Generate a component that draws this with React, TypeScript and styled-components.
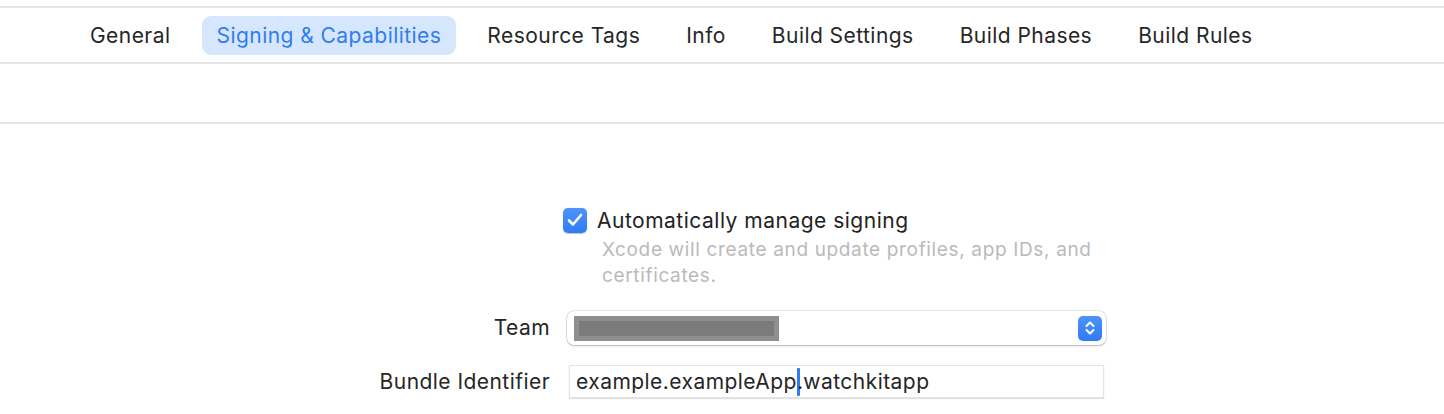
import React from "react"
import styled, { createGlobalStyle } from "styled-components"

const GlobalStyle = createGlobalStyle`
    html, body {
        margin: 0;
        padding: 0;
        background: #ffffff;
    }
    body {
        font-family: "Inter", "Noto Sans", "Liberation Sans", sans-serif;
        color: #262626;
        -webkit-font-smoothing: antialiased;
    }
`;

const tabs = [
    'General',
    'Signing & Capabilities',
    'Resource Tags',
    'Info',
    'Build Settings',
    'Build Phases',
    'Build Rules',
];

const Tab = ({ text, selected }: { text: string; selected?: boolean }) => (
    <TabItem $selected={selected}>{text}</TabItem>
);

const Stepper = () => (
    <StepperButton>
        <svg width="12" height="16" viewBox="0 0 12 16" fill="none">
            <path d="M2.5 6 L6 2.5 L9.5 6" stroke="#fff" strokeWidth="2" strokeLinecap="round" strokeLinejoin="round" />
            <path d="M2.5 10 L6 13.5 L9.5 10" stroke="#fff" strokeWidth="2" strokeLinecap="round" strokeLinejoin="round" />
        </svg>
    </StepperButton>
);

export default function App() {
    return (
        <>
            <GlobalStyle />
            <Page>
                <TabBar>
                    {tabs.map(t => (
                        <Tab key={t} text={t} selected={t === 'Signing & Capabilities'} />
                    ))}
                </TabBar>
                <Spacer />
                <Form>
                    <FieldLabel />
                    <CheckboxBlock>
                        <CheckboxRow>
                            <Checkbox>
                                <svg width="16" height="14" viewBox="0 0 16 14" fill="none">
                                    <path d="M2 7.5 L6 11.5 L14 2" stroke="#fff" strokeWidth="2.6" strokeLinecap="round" strokeLinejoin="round" />
                                </svg>
                            </Checkbox>
                            <CheckboxText>Automatically manage signing</CheckboxText>
                        </CheckboxRow>
                        <Description>
                            Xcode will create and update profiles, app IDs, and certificates.
                        </Description>
                    </CheckboxBlock>

                    <FieldLabel $top={22}>Team</FieldLabel>
                    <PopupButton>
                        <Redaction />
                        <Stepper />
                    </PopupButton>

                    <FieldLabel $top={20}>Bundle Identifier</FieldLabel>
                    <TextField>
                        example.exampleApp<Caret />.watchkitapp
                    </TextField>
                </Form>
            </Page>
        </>
    )
}

const Page = styled.div`
    padding-top: 6px;
    width: 1444px;
    height: 414px;
    overflow: hidden;
`;

const TabBar = styled.div`
    display: flex;
    flex-direction: row;
    align-items: center;
    gap: 16px;
    height: 54px;
    padding-left: 75px;
    border-top: 2px solid #e6e6e6;
    border-bottom: 2px solid #e6e6e6;
`;

const TabItem = styled.div<{ $selected?: boolean }>`
    display: flex;
    align-items: center;
    height: 39px;
    padding: 0 15px;
    border-radius: 9px;
    font-size: 21px;
    letter-spacing: 0.45px;
    white-space: nowrap;
    color: ${p => p.$selected ? '#2f7cf3' : '#262626'};
    background: ${p => p.$selected ? '#d6e6fc' : 'transparent'};
`;

const Spacer = styled.div`
    height: 58px;
    border-bottom: 2px solid #e6e6e6;
`;

const Form = styled.div`
    display: grid;
    grid-template-columns: 550px 541px;
    column-gap: 13px;
    padding-top: 83px;
    align-items: start;
`;

const FieldLabel = styled.div<{ $top?: number }>`
    margin-top: ${p => p.$top ?? 0}px;
    height: 34px;
    line-height: 34px;
    text-align: right;
    font-size: 21px;
    letter-spacing: 0.45px;
    color: #262626;
    white-space: nowrap;
`;

const CheckboxBlock = styled.div`
    display: flex;
    flex-direction: column;
`;

const CheckboxRow = styled.div`
    display: flex;
    flex-direction: row;
    align-items: center;
    gap: 10px;
    height: 26px;
`;

const Checkbox = styled.div`
    display: flex;
    align-items: center;
    justify-content: center;
    width: 24px;
    height: 25px;
    border-radius: 5px;
    background: linear-gradient(#4d93fa, #2f7bf5);
    box-shadow: 0 0.5px 1px rgba(0, 0, 0, 0.25);
`;

const CheckboxText = styled.span`
    font-size: 21px;
    letter-spacing: 0.5px;
    color: #222222;
    white-space: nowrap;
`;

const Description = styled.div`
    margin-top: 4px;
    padding-left: 39px;
    max-width: 500px;
    font-size: 19px;
    letter-spacing: 0.65px;
    line-height: 26px;
    color: #bababa;
`;

const PopupButton = styled.div`
    grid-column: 2;
    margin-top: 22px;
    margin-left: 4px;
    width: 539px;
    height: 34px;
    box-sizing: border-box;
    display: flex;
    flex-direction: row;
    align-items: center;
    justify-content: space-between;
    padding: 0 4px 0 7px;
    border-radius: 7px;
    background: #ffffff;
    box-shadow: 0 0 0 0.5px rgba(0, 0, 0, 0.18), 0 1px 2px rgba(0, 0, 0, 0.22);
`;

const Redaction = styled.div`
    width: 195px;
    height: 15px;
    background: #7b7b7b;
    border: 5px solid #8f8f8f;
`;

const StepperButton = styled.div`
    display: flex;
    align-items: center;
    justify-content: center;
    width: 24px;
    height: 25px;
    border-radius: 5px;
    background: linear-gradient(#4d93fa, #2f7bf5);
`;

const TextField = styled.div`
    grid-column: 2;
    margin-top: 20px;
    margin-left: 6px;
    width: 535px;
    height: 33px;
    box-sizing: border-box;
    padding-left: 6px;
    display: flex;
    align-items: center;
    font-size: 21px;
    letter-spacing: 0.45px;
    color: #262626;
    white-space: nowrap;
    border: 1px solid #e4e4e4;
    box-shadow: 0 1px 1px rgba(0, 0, 0, 0.12);
`;

const Caret = styled.span`
    display: inline-block;
    width: 3px;
    height: 28px;
    margin-right: -3px;
    background: #2f7bf6;
    border-radius: 1px;
`;
